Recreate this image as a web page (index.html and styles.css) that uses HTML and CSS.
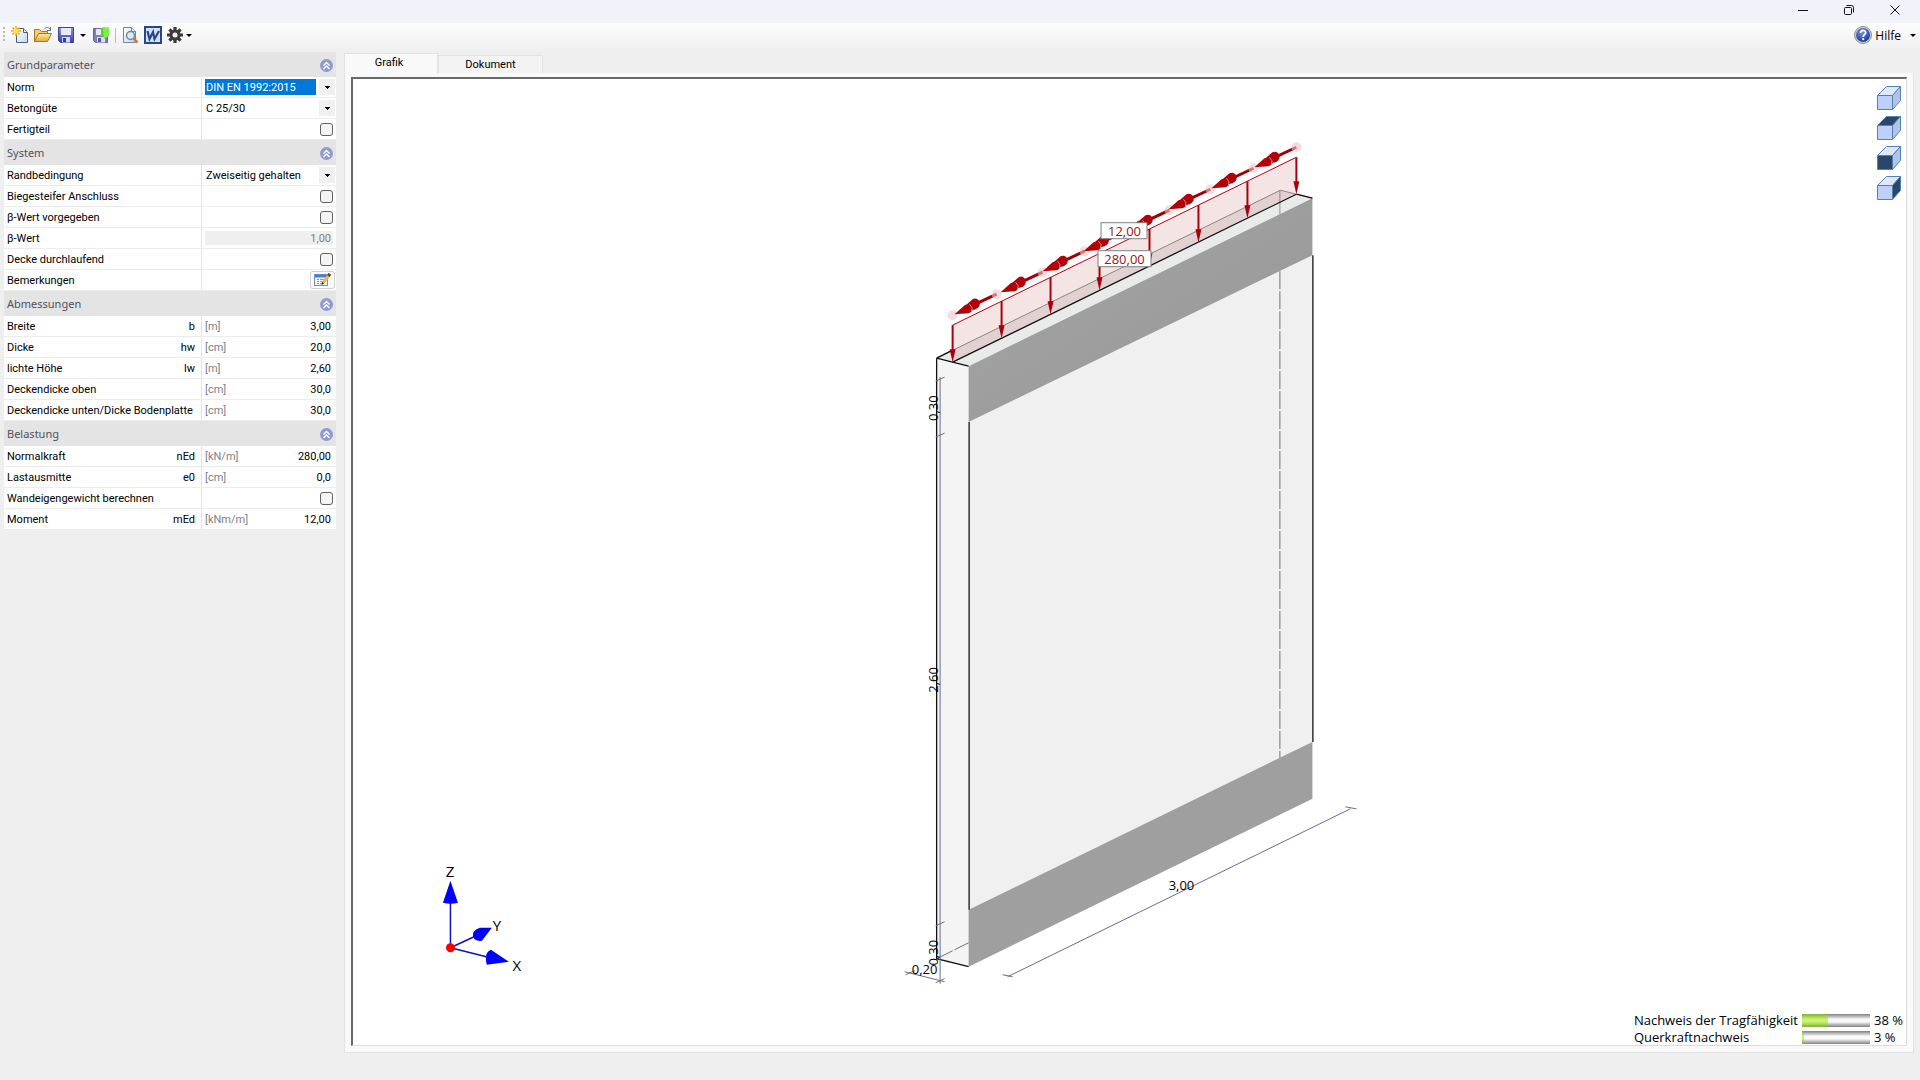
FILE: index.html
```html
<!DOCTYPE html>
<html lang="de">
<head>
    <meta charset="UTF-8">
    <meta name="viewport" content="width=device-width, initial-scale=1.0">
    <title>Stahlbetonwand</title>
    <link rel="stylesheet" href="styles.css">
</head>
<body>
    <header class="titlebar">
        <button type="button" class="win-btn" aria-label="Minimieren">
            <svg width="12" height="12" viewBox="0 0 12 12"><path d="M1 6.500h10" class="win-line"/></svg>
        </button>
        <button type="button" class="win-btn" aria-label="Wiederherstellen">
            <svg width="12" height="12" viewBox="0 0 12 12"><rect x="1.500" y="3.500" width="7" height="7" rx="1" class="win-line"/><path d="M3.500 1.500h5a2 2 0 0 1 2 2v5" class="win-line"/></svg>
        </button>
        <button type="button" class="win-btn" aria-label="Schließen">
            <svg width="12" height="12" viewBox="0 0 12 12"><path d="M1.500 1.500l9 9M10.500 1.500l-9 9" class="win-line"/></svg>
        </button>
    </header>

    <nav class="toolbar">
        <span class="grip"></span>
        <button type="button" class="tool new" aria-label="Neu">
            <svg width="18" height="18" viewBox="0 0 18 18">
                <defs>
                    <linearGradient id="paper" x1="0" y1="0" x2="1" y2="1"><stop offset="0" stop-color="#fff"/><stop offset="1" stop-color="#c3d8ee"/></linearGradient>
                    <linearGradient id="folder" x1="0" y1="0" x2="0" y2="1"><stop offset="0" stop-color="#ffe9a0"/><stop offset="1" stop-color="#e5a93a"/></linearGradient>
                    <linearGradient id="disk" x1="0" y1="0" x2="0" y2="1"><stop offset="0" stop-color="#8d96e6"/><stop offset="1" stop-color="#3a3f9f"/></linearGradient>
                </defs>
                <path d="M5.500 2.500h7l4 4v10h-11z" fill="url(#paper)" stroke="#4a6076"/>
                <path d="M12.500 2.500v4h4" fill="#d9e6f2" stroke="#4a6076"/>
                <path d="M5 0v10M0 5h10M1.500 1.500l7 7M8.500 1.500l-7 7" stroke="#f5a31c" stroke-width="1.500"/>
                <circle cx="5" cy="5" r="2.700" fill="#ffe24d"/>
            </svg>
        </button>
        <button type="button" class="tool" aria-label="Öffnen">
            <svg width="18" height="18" viewBox="0 0 18 18">
                <path d="M.5 15.500v-12h5l2 2h6v3" fill="#f3cf78" stroke="#a9761e"/>
                <path d="M.5 15.500l4-8h13l-4 8z" fill="url(#folder)" stroke="#a9761e"/>
                <path d="M10 3.500c2-3 5-2.500 6 0M16.500 1v3.500h-3.500" fill="none" stroke="#5b7186"/>
            </svg>
        </button>
        <button type="button" class="tool save" aria-label="Speichern">
            <svg width="18" height="18" viewBox="0 0 18 18">
                <path d="M1.500 1.500h15v15h-13l-2-2z" fill="url(#disk)" stroke="#3c4299"/>
                <rect x="4" y="2" width="10" height="7" fill="#e8ecfa"/>
                <rect x="5" y="11" width="8" height="5.500" fill="#d7dcf2"/>
                <rect x="6" y="12" width="3" height="4" fill="#353b8c"/>
            </svg>
        </button>
        <button type="button" class="tool drop" aria-label="Speichern Optionen"><span class="arrow"></span></button>
        <button type="button" class="tool" aria-label="Speichern und schließen">
            <svg width="18" height="18" viewBox="0 0 18 18">
                <path d="M1.500 2.500h14v14h-12l-2-2z" fill="#8180b8" stroke="#6564a0"/>
                <rect x="4" y="3" width="7" height="6" fill="#e6e8f2"/>
                <rect x="5" y="11" width="8" height="5.500" fill="#dcdeee"/>
                <rect x="6" y="12" width="3" height="4" fill="#57579a"/>
                <path d="M9 2l4-1v10l-4-1z" fill="#56d32f"/>
                <path d="M11 2l6-1v9l-5 3z" fill="#7ced4d"/>
            </svg>
        </button>
        <span class="separator"></span>
        <button type="button" class="tool" aria-label="Druckvorschau">
            <svg width="18" height="18" viewBox="0 0 18 18">
                <path d="M2.500 1.500h8l4 4v11h-12z" fill="url(#paper)" stroke="#71869c"/>
                <path d="M10.500 1.500v4h4" fill="#e5edf5" stroke="#71869c"/>
                <circle cx="9.500" cy="9.500" r="4" fill="#d6ecf7" stroke="#7b8790" stroke-width="1.500"/>
                <path d="M12.500 12.500l4 4" stroke="#c87a3a" stroke-width="2.500"/>
            </svg>
        </button>
        <button type="button" class="tool word" aria-label="Word">
            <svg width="18" height="18" viewBox="0 0 18 18">
                <rect x="1" y="1" width="16" height="16" fill="#d5e0f4" stroke="#25488c" stroke-width="2"/>
                <path d="M3.500 5l2 8L9 6l1.500 7L15 5" fill="none" stroke="#25488c" stroke-width="2.200"/>
            </svg>
        </button>
        <button type="button" class="tool gear" aria-label="Einstellungen">
            <svg width="16" height="16" viewBox="0 0 16 16">
                <g stroke="#3b3b3b" stroke-width="3.200"><path d="M8 0v16M0 8h16M2.400 2.400l11.200 11.200M13.600 2.400L2.400 13.600"/></g>
                <circle cx="8" cy="8" r="5.600" fill="#3b3b3b"/><circle cx="8" cy="8" r="2.500" fill="#f8f8f8"/>
            </svg>
            <span class="arrow"></span>
        </button>
        <button type="button" class="tool help">
            <svg width="18" height="18" viewBox="0 0 18 18">
                <defs><radialGradient id="ball" cx=".4" cy=".3" r=".8"><stop offset="0" stop-color="#6f93e6"/><stop offset="1" stop-color="#132f8e"/></radialGradient></defs>
                <circle cx="9" cy="9" r="8.500" fill="#d0d0d0" stroke="#909090"/>
                <circle cx="9" cy="9" r="7" fill="url(#ball)"/>
                <path d="M6.500 7c0-3.500 5.500-3.200 5.200-.2C11.500 8.500 9.200 8.500 9.200 11" fill="none" stroke="#fff" stroke-width="1.800"/>
                <circle cx="9.200" cy="13.200" r="1.100" fill="#fff"/>
            </svg>
            <span>Hilfe</span>
            <span class="arrow"></span>
        </button>
    </nav>

    <main class="workspace">
        <form class="params">
            <section>
                <h2>Grundparameter <button type="button" class="collapse" aria-label="Einklappen"><svg width="13" height="13" viewBox="0 0 13 13"><circle cx="6.500" cy="6.500" r="6.500"/><path d="M3.500 6.500l3-3 3 3M3.500 10l3-3 3 3"/></svg></button></h2>
                <div class="row"><label for="norm">Norm</label><div class="cell combo"><select id="norm" class="selected"><option>DIN EN 1992:2015</option></select></div></div>
                <div class="row"><label for="beton">Betongüte</label><div class="cell combo"><select id="beton"><option>C 25/30</option></select></div></div>
                <div class="row"><label for="fertig">Fertigteil</label><div class="cell"><input type="checkbox" id="fertig"></div></div>
            </section>
            <section>
                <h2>System <button type="button" class="collapse" aria-label="Einklappen"><svg width="13" height="13" viewBox="0 0 13 13"><circle cx="6.500" cy="6.500" r="6.500"/><path d="M3.500 6.500l3-3 3 3M3.500 10l3-3 3 3"/></svg></button></h2>
                <div class="row"><label for="rand">Randbedingung</label><div class="cell combo"><select id="rand"><option>Zweiseitig gehalten</option></select></div></div>
                <div class="row"><label for="biege">Biegesteifer Anschluss</label><div class="cell"><input type="checkbox" id="biege"></div></div>
                <div class="row"><label for="betavor">β-Wert vorgegeben</label><div class="cell"><input type="checkbox" id="betavor"></div></div>
                <div class="row"><label for="beta">β-Wert</label><div class="cell"><input type="text" id="beta" value="1,00" disabled></div></div>
                <div class="row"><label for="decke">Decke durchlaufend</label><div class="cell"><input type="checkbox" id="decke"></div></div>
                <div class="row"><label for="bem">Bemerkungen</label><div class="cell combo"><button type="button" id="bem" class="note">
                    <svg width="18" height="14" viewBox="0 0 18 14">
                        <rect x=".5" y="1.500" width="13" height="11" fill="#eef4fc" stroke="#6f8fc0"/>
                        <path d="M1 3h12" stroke="#4d7ad0" stroke-width="3"/>
                        <path d="M3 6.500h2M6 6.500h5M3 8.500h2M6 8.500h4M3 10.500h2M6 10.500h3" stroke="#7f9bc4"/>
                        <path d="M9 10l6-8" stroke="#e8b94a" stroke-width="3"/>
                        <path d="M14.300 3l1.600-2.200" stroke="#8a2f2f" stroke-width="3"/>
                        <path d="M7.500 12l.6-3 2 1.500z" fill="#222"/>
                    </svg>
                </button></div></div>
            </section>
            <section>
                <h2>Abmessungen <button type="button" class="collapse" aria-label="Einklappen"><svg width="13" height="13" viewBox="0 0 13 13"><circle cx="6.500" cy="6.500" r="6.500"/><path d="M3.500 6.500l3-3 3 3M3.500 10l3-3 3 3"/></svg></button></h2>
                <div class="row"><label for="b">Breite <span>b</span></label><div class="cell"><span class="unit">[m]</span><input type="text" id="b" value="3,00"></div></div>
                <div class="row"><label for="hw">Dicke <span>hw</span></label><div class="cell"><span class="unit">[cm]</span><input type="text" id="hw" value="20,0"></div></div>
                <div class="row"><label for="lw">lichte Höhe <span>lw</span></label><div class="cell"><span class="unit">[m]</span><input type="text" id="lw" value="2,60"></div></div>
                <div class="row"><label for="dob">Deckendicke oben</label><div class="cell"><span class="unit">[cm]</span><input type="text" id="dob" value="30,0"></div></div>
                <div class="row"><label for="dun">Deckendicke unten/Dicke Bodenplatte</label><div class="cell"><span class="unit">[cm]</span><input type="text" id="dun" value="30,0"></div></div>
            </section>
            <section>
                <h2>Belastung <button type="button" class="collapse" aria-label="Einklappen"><svg width="13" height="13" viewBox="0 0 13 13"><circle cx="6.500" cy="6.500" r="6.500"/><path d="M3.500 6.500l3-3 3 3M3.500 10l3-3 3 3"/></svg></button></h2>
                <div class="row"><label for="ned">Normalkraft <span>nEd</span></label><div class="cell"><span class="unit">[kN/m]</span><input type="text" id="ned" value="280,00"></div></div>
                <div class="row"><label for="e0">Lastausmitte <span>e0</span></label><div class="cell"><span class="unit">[cm]</span><input type="text" id="e0" value="0,0"></div></div>
                <div class="row"><label for="eigen">Wandeigengewicht berechnen</label><div class="cell"><input type="checkbox" id="eigen"></div></div>
                <div class="row"><label for="med">Moment <span>mEd</span></label><div class="cell"><span class="unit">[kNm/m]</span><input type="text" id="med" value="12,00"></div></div>
            </section>
        </form>

        <div class="view">
            <div class="tabs">
                <button type="button" class="tab active">Grafik</button>
                <button type="button" class="tab">Dokument</button>
            </div>
            <div class="page">
                <div class="canvas">
                    <svg class="drawing" viewBox="352 79 1554 966">
                        <defs>
                            <linearGradient id="slab" x1="0" y1="0" x2="1" y2="1"><stop offset="0" stop-color="#a4a4a4"/><stop offset="1" stop-color="#989898"/></linearGradient>
                            <!-- Linienlast -->
                            <g id="load">
                                <path d="M0-36V-10" stroke="#a8000c" stroke-width="2"/>
                                <path d="M-3-12h6L0 1z" fill="#a8000c"/>
                            </g>
                            <!-- Momentenpfeil mit doppelter Spitze -->
                            <g id="moment" fill="#b40008">
                                <path d="M8-4L42-20" stroke="#a00008" stroke-width="3"/>
                                <circle cx="42" cy="-20" r="5" fill="#f0c4c6" opacity=".6"/>
                                <path d="M10-8l8-7q5-2 7 3 1 5-4 7l-8 2z"/>
                                <path d="M0 0l10-9q5-2 7 3 1 4-3 5z"/>
                                <path d="M15-10q4 3 2 8" fill="none" stroke="#d98a8e"/>
                            </g>
                        </defs>

                        <!-- Wand -->
                        <path d="M936 358l344-168 32 8-344 168z" fill="#e9eaea"/>
                        <path d="M936 358l32 8v601l-32-8z" fill="#f4f4f4"/>
                        <path d="M968 366l344-168v601L968 967z" fill="#f0f0f0"/>
                        <path d="M968 366l344-168v57L968 422z" fill="url(#slab)"/>
                        <path d="M968 910l344-168v57L968 967z" fill="#9f9f9f"/>
                        <path d="M936 358l344-168 32 8" class="hidden-edge"/>
                        <path d="M1279.500 190v24" class="hidden-edge"/>
                        <path d="M1279.500 271v487" class="hidden-edge dashed"/>
                        <path d="M936 959l32-16" class="hidden-edge dashed"/>
                        <path d="M936 358l32 8M936 358v601l32 8M968.500 422v488M1312.500 255v487M1296 194l16 4M936 358l16-8" class="edge"/>

                        <!-- Belastung -->
                        <path d="M952 325l344-168v37L952 362z" fill="#b02020" opacity=".12"/>
                        <path d="M952 325l344-168" stroke="#b00010"/>
                        <path d="M952 362l344-168" class="edge"/>
                        <use href="#load" x="952" y="361"/>
                        <use href="#load" x="1001" y="337"/>
                        <use href="#load" x="1050" y="313"/>
                        <use href="#load" x="1099" y="289"/>
                        <use href="#load" x="1149" y="265"/>
                        <use href="#load" x="1198" y="241"/>
                        <use href="#load" x="1247" y="217"/>
                        <use href="#load" x="1296" y="193"/>
                        <circle cx="952" cy="315" r="5" fill="#f0c4c6" opacity=".6"/>
                        <use href="#moment" x="954" y="314"/>
                        <use href="#moment" x="1000" y="292"/>
                        <use href="#moment" x="1042" y="271"/>
                        <use href="#moment" x="1083" y="251"/>
                        <use href="#moment" x="1127" y="230"/>
                        <use href="#moment" x="1168" y="209"/>
                        <use href="#moment" x="1211" y="188"/>
                        <use href="#moment" x="1254" y="167"/>
                        <rect x="1100.500" y="222.500" width="46" height="16" class="tag"/>
                        <text x="1124" y="236" class="tag-text">12,00</text>
                        <rect x="1097.500" y="250.500" width="53" height="16" class="tag"/>
                        <text x="1124" y="264" class="tag-text">280,00</text>

                        <!-- Maßketten -->
                        <path d="M939.500 377v607M935 381l9-4M935 437l9-4M935 926l9-4M935 983l9-4" class="dim"/>
                        <path d="M904 972l40 10M905 975l9-4" class="dim"/>
                        <path d="M1007 977l343-168M1002 975l10 2M1345 807l11 2" class="dim"/>
                        <text transform="translate(937 408) rotate(-90)" class="dim-text">0,30</text>
                        <text transform="translate(937 680) rotate(-90)" class="dim-text">2,60</text>
                        <text transform="translate(937 953) rotate(-90)" class="dim-text">0,30</text>
                        <text x="924" y="974" class="dim-text">0,20</text>
                        <text x="1181" y="890" class="dim-text">3,00</text>

                        <!-- Achsenkreuz -->
                        <path d="M449.500 948v-50M449.500 948l30-14M449.500 948l40 10" stroke="#1010c8" stroke-width="1.500"/>
                        <path d="M442 903l7.500-22 7.500 22q-7 2-15 0zM491 928l-12 0q-8 3-7 8 1 6 9 5zM508 962l-18-12q-5 2-5 8 0 5 1 7z" fill="#00f"/>
                        <circle cx="449.500" cy="948" r="4.500" fill="#f00"/>
                        <text x="449" y="877" class="axis">Z</text>
                        <text x="496" y="931" class="axis">Y</text>
                        <text x="516" y="971" class="axis">X</text>
                    </svg>

                    <div class="cubes">
                        <button type="button" aria-label="Isometrie"><svg width="24" height="24" viewBox="0 0 24 24" class="cube"><path class="top" d="M.5 9.500l9-9h14l-8 9z"/><path class="side" d="M15.500 9.500l8-9v14l-8 9z"/><path class="front" d="M.5 9.500h15v14H.5z"/></svg></button>
                        <button type="button" aria-label="Draufsicht"><svg width="24" height="24" viewBox="0 0 24 24" class="cube"><path class="top dark" d="M.5 9.500l9-9h14l-8 9z"/><path class="side" d="M15.500 9.500l8-9v14l-8 9z"/><path class="front" d="M.5 9.500h15v14H.5z"/></svg></button>
                        <button type="button" aria-label="Vorderansicht"><svg width="24" height="24" viewBox="0 0 24 24" class="cube"><path class="top" d="M.5 9.500l9-9h14l-8 9z"/><path class="side" d="M15.500 9.500l8-9v14l-8 9z"/><path class="front dark" d="M.5 9.500h15v14H.5z"/></svg></button>
                        <button type="button" aria-label="Seitenansicht"><svg width="24" height="24" viewBox="0 0 24 24" class="cube"><path class="top" d="M.5 9.500l9-9h14l-8 9z"/><path class="side dark" d="M15.500 9.500l8-9v14l-8 9z"/><path class="front" d="M.5 9.500h15v14H.5z"/></svg></button>
                    </div>

                    <div class="results">
                        <span>Nachweis der Tragfähigkeit</span><span class="bar"><span class="fill" style="width: 38%"></span></span><span>38 %</span>
                        <span>Querkraftnachweis</span><span class="bar"><span class="fill" style="width: 3%"></span></span><span>3 %</span>
                    </div>
                </div>
            </div>
        </div>
    </main>
</body>
</html>
```

FILE: styles.css
```css
* {
    box-sizing: border-box;
}
body {
    margin: 0;
    min-height: 100vh;
    display: flex;
    flex-direction: column;
    background: #efefef;
    color: #000;
    font-family: Roboto, "Liberation Sans", sans-serif;
    font-size: 11px;
}
button {
    border: none;
    background: none;
    padding: 0;
    font: inherit;
    color: inherit;
}
svg {
    display: block;
    fill: none;
}

/* Titelleiste */
.titlebar {
    display: flex;
    justify-content: flex-end;
    height: 23px;
    background: #f0f3f9;
    padding-right: 2px;
}
.win-btn {
    width: 46px;
    display: flex;
    justify-content: center;
    align-items: center;
    padding-bottom: 3px;
}
.win-line {
    fill: none;
    stroke: #111;
}

/* Werkzeugleiste */
.toolbar {
    display: flex;
    align-items: center;
    height: 29px;
    padding: 0 4px 5px 3px;
    background: linear-gradient(#fdfdfd, #efefef);
}
.grip {
    width: 2px;
    height: 16px;
    margin-right: 3px;
    background: repeating-linear-gradient(#b8b8b8 0 2px, transparent 2px 4px);
}
.tool {
    display: flex;
    align-items: center;
    justify-content: center;
    width: 23px;
    height: 22px;
}
.drop {
    width: 12px;
}
.arrow {
    border: 3px solid transparent;
    border-top-color: #000;
    border-bottom: none;
}
.separator {
    width: 1px;
    height: 15px;
    margin: 0 2px 0 3px;
    background: #bcbcbc;
}
.gear {
    width: 30px;
    gap: 3px;
}
.help {
    width: auto;
    gap: 3px;
    margin-left: auto;
    font: 12px "Open Sans", sans-serif;
}
.help .arrow {
    margin-left: 6px;
}

.workspace {
    flex: 1;
    display: flex;
    gap: 8px;
}

/* Eingabe */
.params {
    width: 332px;
    margin-left: 4px;
    flex: none;
}
.params h2 {
    display: flex;
    justify-content: space-between;
    align-items: center;
    height: 25px;
    margin: 0;
    padding: 0 3px 1px 3px;
    background: #e4e4e4;
    color: #505060;
    font: 11px "Noto Sans", sans-serif;
}
.collapse {
    padding-top: 3px;
}
.collapse circle {
    fill: #8f9bd0;
}
.collapse path {
    stroke: #fff;
    stroke-width: 1.4;
}
.row {
    display: flex;
    height: 21px;
    background: #fff;
    border-bottom: 1px solid #ececec;
}
.row label {
    display: flex;
    justify-content: space-between;
    align-items: center;
    width: 198px;
    padding: 0 6px 0 3px;
    border-right: 1px solid #e4e4e4;
    white-space: nowrap;
}
.cell {
    flex: 1;
    display: flex;
    align-items: center;
    justify-content: flex-end;
    min-width: 0;
    padding: 0 3px;
}
.combo {
    padding-right: 1px;
}
.unit {
    color: #808080;
}
.cell input[type="text"] {
    flex: 1;
    min-width: 0;
    height: 14px;
    padding: 0 2px;
    border: none;
    background: none;
    font: inherit;
    text-align: right;
}
.cell input:disabled {
    background: #efefef;
    color: #808080;
}
.cell input[type="checkbox"] {
    appearance: none;
    width: 13px;
    height: 13px;
    margin: 0;
    border: 1px solid #606060;
    border-radius: 3px;
    background: #f4f4f4;
}
.cell select {
    appearance: none;
    width: 100%;
    height: 16px;
    padding: 0 1px;
    border: none;
    font: inherit;
    color: #000;
    background: linear-gradient(#000, #000) no-repeat right 5px top 7px / 5px 1px,
        linear-gradient(#000, #000) no-repeat right 6px top 8px / 3px 1px,
        linear-gradient(#000, #000) no-repeat right 7px top 9px / 1px 1px,
        linear-gradient(90deg, transparent calc(100% - 16px), #f0f0f0 0);
}
.cell select.selected {
    color: #fff;
    background: linear-gradient(#000, #000) no-repeat right 5px top 7px / 5px 1px,
        linear-gradient(#000, #000) no-repeat right 6px top 8px / 3px 1px,
        linear-gradient(#000, #000) no-repeat right 7px top 9px / 1px 1px,
        linear-gradient(90deg, #0078d7 calc(100% - 19px), #fff 0 calc(100% - 16px), #f0f0f0 0);
}
.note {
    display: flex;
    align-items: center;
    justify-content: center;
    width: 25px;
    height: 18px;
    border: 1px solid #cfcfcf;
    border-radius: 3px;
    background: #fdfdfd;
}

/* Ansicht */
.view {
    flex: 1;
    display: flex;
    flex-direction: column;
    min-width: 0;
    padding: 0 6px 27px 0;
}
.tabs {
    display: flex;
    align-items: flex-end;
    height: 21px;
}
.tab {
    width: 105px;
    height: 18px;
    border: 1px solid #e2e2e2;
    border-bottom: none;
    background: #f3f3f3;
}
.tab.active {
    width: 94px;
    height: 20px;
    padding-bottom: 2px;
    padding-right: 4px;
    background: #f9f9f9;
}
.page {
    flex: 1;
    display: flex;
    padding: 4px 6px 6px;
    border: 1px solid #e2e2e2;
    border-top: none;
    background: #f9f9f9;
}
.canvas {
    position: relative;
    flex: 1;
    border: 1px solid #dcdcdc;
    border-top: 2px solid #696969;
    border-left: 2px solid #696969;
    background: #fff;
}
.drawing {
    width: 100%;
    height: 100%;
}
.edge {
    stroke: #111;
    stroke-width: 1.3;
}
.hidden-edge {
    stroke: #909090;
}
.dashed {
    stroke: #707070;
    stroke-dasharray: 18 2;
}
.dim {
    stroke: #6a6a8c;
}
.drawing text {
    fill: #000;
    font: 13px "Open Sans", sans-serif;
    text-anchor: middle;
}
.drawing .axis {
    font-size: 15px;
}
.tag {
    fill: #fff;
    stroke: #808080;
}
.drawing .tag-text {
    fill: #a01018;
}

.cubes {
    position: absolute;
    top: 7px;
    right: 5px;
    display: flex;
    flex-direction: column;
    gap: 6px;
}
.cube {
    stroke: #5580b4;
}
.cube .top {
    fill: #dfe8fa;
}
.cube .side {
    fill: #b2c4e6;
}
.cube .front {
    fill: #bcd0fb;
}
.cube .dark {
    fill: #2a4769;
}

.results {
    position: absolute;
    right: 3px;
    bottom: -1px;
    display: grid;
    grid-template-columns: auto 68px 29px;
    column-gap: 4px;
    align-items: center;
    line-height: 17px;
    font-family: "Open Sans", sans-serif;
    font-size: 13px;
    white-space: nowrap;
}
.bar {
    height: 13px;
    background: linear-gradient(#808080, #fafafa 40%, #fafafa 60%, #808080);
}
.fill {
    display: block;
    height: 100%;
    background: linear-gradient(#82ac3c, #c8f36e 40%, #c8f36e 60%, #82ac3c);
}
```
